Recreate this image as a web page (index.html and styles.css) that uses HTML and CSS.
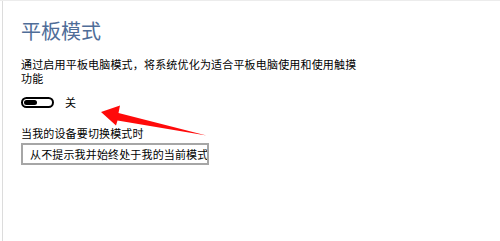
FILE: index.html
```html
<!DOCTYPE html>
<html lang="zh-CN">
<head>
<meta charset="utf-8">
<title>平板模式</title>
<link rel="stylesheet" href="styles.css">
</head>
<body>
<div class="frame">
  <div class="panel">
    <h1 class="title">平板模式</h1>
    <p class="desc">通过启用平板电脑模式，将系统优化为适合平板电脑使用和使用触摸功能</p>
    <div class="toggle-row">
      <span class="toggle"><span class="knob"></span></span>
      <span class="toggle-label">关</span>
    </div>
    <div class="label">当我的设备要切换模式时</div>
    <div class="select">从不提示我并始终处于我的当前模式</div>
  </div>
</div>
<svg class="arrow" width="500" height="241" viewBox="0 0 500 241">
  <polygon points="101,112 120,105.5 118.5,113 206.5,135.5 117.5,120.5 116,125.5" fill="#ff0a0a"/>
</svg>
</body>
</html>
```
FILE: styles.css
```css
html, body {
  margin: 0;
  padding: 0;
  background: #ffffff;
}
body {
  width: 500px;
  height: 241px;
  overflow: hidden;
  position: relative;
  font-family: "Noto Sans CJK SC", "Noto Sans", sans-serif;
  color: #000000;
}
.frame {
  height: 240px;
  border-top: 1px solid #ececec;
  padding-left: 2px;
}
.panel {
  height: 240px;
  border-left: 1px solid #dcdcdc;
  padding-left: 18px;
  box-sizing: border-box;
}
.title {
  margin: 0;
  padding-top: 19px;
  font-size: 20px;
  line-height: 22px;
  font-weight: normal;
  color: #4f6d98;
}
.desc {
  margin: 16px 0 0 0;
  width: 342px;
  font-size: 11px;
  line-height: 13.5px;
  letter-spacing: 0.18px;
}
.toggle-row {
  display: flex;
  align-items: center;
  margin-top: 11px;
  height: 12px;
}
.toggle {
  display: flex;
  align-items: center;
  box-sizing: border-box;
  width: 33px;
  height: 11px;
  border: 2px solid #000;
  border-radius: 6px;
  padding-left: 1px;
}
.knob {
  width: 13px;
  height: 5px;
  background: #000;
  border-radius: 3px;
}
.toggle-label {
  margin-left: 11px;
  font-size: 11px;
  line-height: 12px;
}
.label {
  margin-top: 18px;
  font-size: 11px;
  line-height: 14px;
  letter-spacing: 0.15px;
}
.select {
  margin-top: 3px;
  box-sizing: border-box;
  width: 188px;
  height: 22px;
  border: 2px solid #a6a6a6;
  padding-left: 7px;
  font-size: 11px;
  line-height: 18px;
  letter-spacing: 0.15px;
  white-space: nowrap;
  overflow: hidden;
}
.arrow {
  position: absolute;
  left: 0;
  top: 0;
  pointer-events: none;
}
```
